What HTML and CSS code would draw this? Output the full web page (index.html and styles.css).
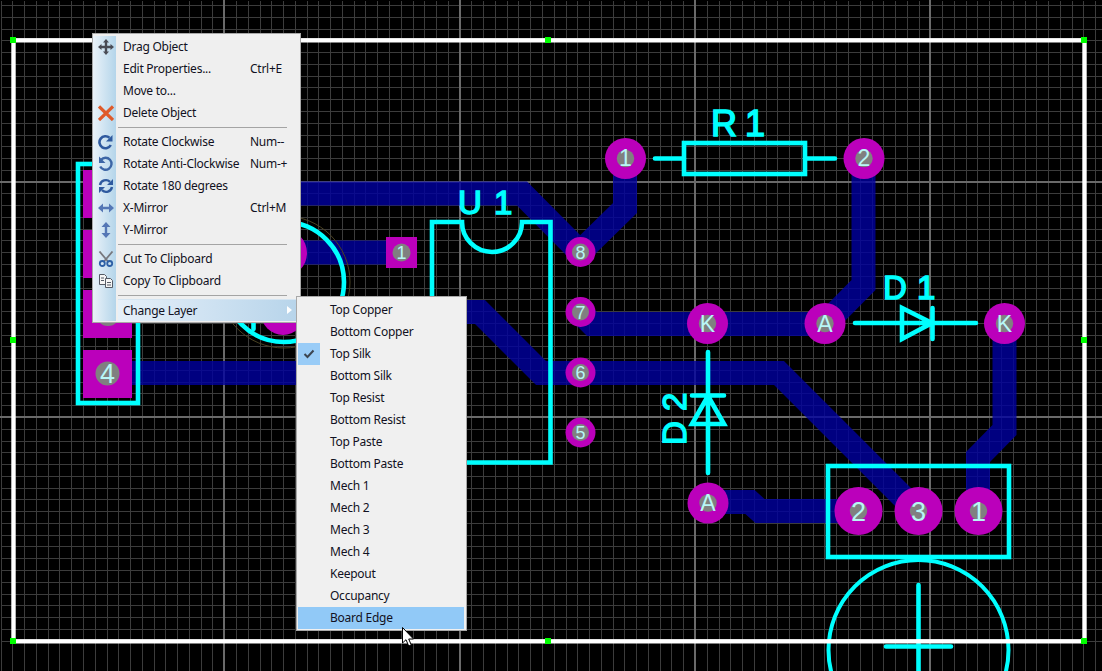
FILE: index.html
```html
<!DOCTYPE html>
<html lang="en">
<head>
  <meta charset="UTF-8">
  <title>PCB Layout</title>
  <link rel="stylesheet" href="styles.css">
</head>
<body>
  <div class="board">
    <svg class="pcb" width="1102" height="671" viewBox="0 0 1102 671">
      <path id="gridMinor" class="grid-minor" d=""/>
      <path id="gridMajor" class="grid-major" d=""/>

      <!-- copper -->
      <g class="tracks">
        <path d="M108 373H296"/>
        <path d="M290 193.500H522L580 252"/>
        <path d="M625 158V208L580 252"/>
        <path d="M300 252.500H401"/>
        <path d="M440 312H480L541 373H779L918 512"/>
        <path d="M580 312L592 324H825L863.500 285V158"/>
        <path d="M1004.500 323V430L978 457V511"/>
        <path d="M708 502H750L760 511H858"/>
      </g>

      <!-- pads -->
      <g class="pads">
        <rect x="83" y="170" width="49" height="48"/>
        <rect x="83" y="230" width="49" height="48"/>
        <rect x="83" y="290" width="49" height="48"/>
        <rect x="83" y="350" width="49" height="48"/>
        <rect x="386" y="237" width="31" height="31"/>
        <circle cx="283" cy="253" r="24"/>
        <circle cx="283" cy="313" r="22"/>
        <circle cx="625.500" cy="158.500" r="20.500"/>
        <circle cx="864" cy="158.500" r="20.500"/>
        <circle cx="707.500" cy="323.500" r="20.500"/>
        <circle cx="825" cy="323.500" r="20.500"/>
        <circle cx="1004.500" cy="323.500" r="20.500"/>
        <circle cx="708" cy="503" r="20.500"/>
        <circle cx="580.500" cy="252" r="15"/>
        <circle cx="580.500" cy="312" r="15"/>
        <circle cx="580.500" cy="372.500" r="15"/>
        <circle cx="580.500" cy="432.500" r="15"/>
        <circle cx="858.500" cy="511" r="24"/>
        <circle cx="918.500" cy="511" r="24"/>
        <circle cx="978.500" cy="511" r="24"/>
      </g>
      <g class="holes">
        <circle cx="108" cy="194" r="12"/>
        <circle cx="108" cy="254" r="12"/>
        <circle cx="108" cy="314" r="12"/>
        <circle cx="107.500" cy="373.500" r="12"/>
        <circle cx="401.500" cy="252.500" r="9"/>
        <circle cx="625.500" cy="158.500" r="8.700"/>
        <circle cx="864" cy="158.500" r="8.700"/>
        <circle cx="707.500" cy="323.500" r="8.700"/>
        <circle cx="825" cy="323.500" r="8.700"/>
        <circle cx="1004.500" cy="323.500" r="8.700"/>
        <circle cx="708" cy="503" r="8.700"/>
        <circle cx="580.500" cy="252" r="8.500"/>
        <circle cx="580.500" cy="312" r="8.500"/>
        <circle cx="580.500" cy="372.500" r="8.500"/>
        <circle cx="580.500" cy="432.500" r="8.500"/>
        <circle cx="858.500" cy="511" r="8.700"/>
        <circle cx="918.500" cy="511" r="8.700"/>
        <circle cx="978.500" cy="511" r="8.700"/>
      </g>
      <g class="labels">
        <text class="lbl-big" x="107.500" y="383">4</text>
        <text class="lbl-sm" x="401.500" y="259">1</text>
        <text class="lbl-mid" x="625.500" y="166">1</text>
        <text class="lbl-mid" x="864" y="166">2</text>
        <text class="lbl-mid" x="707.500" y="331.500">K</text>
        <text class="lbl-mid" x="825" y="331.500">A</text>
        <text class="lbl-mid" x="1004.500" y="331.500">K</text>
        <text class="lbl-mid" x="708" y="511">A</text>
        <text class="lbl-sm" x="580.500" y="258.500">8</text>
        <text class="lbl-sm" x="580.500" y="318.500">7</text>
        <text class="lbl-sm" x="580.500" y="379">6</text>
        <text class="lbl-sm" x="580.500" y="439">5</text>
        <text class="lbl-big" x="858.500" y="520.500">2</text>
        <text class="lbl-big" x="918.500" y="520.500">3</text>
        <text class="lbl-big" x="978.500" y="520.500">1</text>
      </g>

      <!-- silk -->
      <g class="silk">
        <rect x="78" y="164" width="60" height="239"/>
        <circle cx="284" cy="282" r="60"/>
        <path d="M253.500 320V329"/>
        <path d="M432 222H462A30 30 0 0 0 522 222H550.500V462.500H432Z"/>
        <rect x="684" y="143" width="121" height="31"/>
        <path d="M655 158.500H684M805 158.500H835"/>
        <path d="M855 323H976M902 308V339L932 323ZM932.500 308V339"/>
        <path d="M708 352V473M692 395.500H724M708 396L692 424H724Z"/>
        <rect x="828" y="466" width="181" height="91"/>
        <circle class="silk-thin" cx="918.500" cy="650" r="90"/>
        <path d="M918.500 585V671M886 646.500H951"/>
      </g>
      <circle class="courtyard" cx="284" cy="282" r="66"/>
      <g class="silk-text">
        <text x="711 745" y="136" class="ref-lg">R1</text>
        <text x="458 494" y="214" class="ref-md">U1</text>
        <text x="883 917" y="299" class="ref-md">D1</text>
        <text x="0 34" y="0" class="ref-md" transform="translate(686,445) rotate(-90)">D2</text>
      </g>

      <!-- board edge -->
      <rect class="edge" x="13.500" y="40.300" width="1071" height="601"/>
      <g class="handles">
        <rect x="10" y="37" width="6" height="6"/>
        <rect x="545" y="37" width="6" height="6"/>
        <rect x="1081" y="37" width="6" height="6"/>
        <rect x="10" y="337" width="6" height="6"/>
        <rect x="1081" y="337" width="6" height="6"/>
        <rect x="10" y="638" width="6" height="6"/>
        <rect x="545" y="638" width="6" height="6"/>
        <rect x="1081" y="638" width="6" height="6"/>
      </g>
    </svg>

    <div class="menu menu-main">
      <div class="row">
        <span class="ico">
          <svg width="16" height="16" viewBox="0 0 16 16"><path fill="#4a4c55" d="M8 0L11 3.500H9.200V6.800H12.500V5L16 8L12.500 11V9.200H9.200V12.500H11L8 16L5 12.500H6.800V9.200H3.500V11L0 8L3.500 5V6.800H6.800V3.500H5Z"/></svg>
        </span>
        <span class="item">Drag Object</span>
      </div>
      <div class="row">
        <span class="ico"></span>
        <span class="item">Edit Properties...<span class="keys">Ctrl+E</span></span>
      </div>
      <div class="row">
        <span class="ico"></span>
        <span class="item">Move to...</span>
      </div>
      <div class="row">
        <span class="ico">
          <svg width="16" height="16" viewBox="0 0 16 16"><path fill="none" stroke="#df5a2a" stroke-width="3.200" d="M1 1.500L15 15M15 1.500L1 15"/></svg>
        </span>
        <span class="item">Delete Object</span>
      </div>
      <div class="sep"></div>
      <div class="row">
        <span class="ico">
          <svg width="16" height="16" viewBox="0 0 16 16"><path fill="none" stroke="#2f5a9f" stroke-width="2.600" d="M12.800 11A6 6 0 1 1 11.500 3.800"/><path fill="#2f5a9f" d="M14.500 1V7.500H8Z"/></svg>
        </span>
        <span class="item">Rotate Clockwise<span class="keys">Num--</span></span>
      </div>
      <div class="row">
        <span class="ico">
          <svg width="16" height="16" viewBox="0 0 16 16"><path fill="none" stroke="#3d66a6" stroke-width="2.400" d="M3 3.800A6 6 0 1 1 2.200 10.500"/><path fill="#3d66a6" d="M1 0.500V7H7.500Z"/></svg>
        </span>
        <span class="item">Rotate Anti-Clockwise<span class="keys">Num-+</span></span>
      </div>
      <div class="row">
        <span class="ico">
          <svg width="16" height="16" viewBox="0 0 16 16"><path fill="none" stroke="#2f5a9f" stroke-width="2.400" d="M2 7A6 6 0 0 1 12 3.800M14 9A6 6 0 0 1 4 12.200"/><path fill="#2f5a9f" d="M15 1V7H9ZM1 15V9H7Z"/></svg>
        </span>
        <span class="item">Rotate 180 degrees</span>
      </div>
      <div class="row">
        <span class="ico">
          <svg width="16" height="16" viewBox="0 0 16 16"><path fill="#5577b5" d="M0 8L5 3.500V6.800H11V3.500L16 8L11 12.500V9.200H5V12.500Z"/></svg>
        </span>
        <span class="item">X-Mirror<span class="keys">Ctrl+M</span></span>
      </div>
      <div class="row">
        <span class="ico">
          <svg width="16" height="16" viewBox="0 0 16 16"><path fill="#5577b5" d="M8 0L12.500 5H9.200V11H12.500L8 16L3.500 11H6.800V5H3.500Z"/></svg>
        </span>
        <span class="item">Y-Mirror</span>
      </div>
      <div class="sep"></div>
      <div class="row">
        <span class="ico">
          <svg width="16" height="16" viewBox="0 0 16 16"><path fill="none" stroke="#77787e" stroke-width="1.800" d="M1.500 0.500L10 10.500M14.500 0.500L6 10.500"/><circle cx="4.300" cy="12.500" r="2.500" fill="none" stroke="#2d5fa5" stroke-width="1.800"/><circle cx="11.700" cy="12.500" r="2.500" fill="none" stroke="#2d5fa5" stroke-width="1.800"/></svg>
        </span>
        <span class="item">Cut To Clipboard</span>
      </div>
      <div class="row">
        <span class="ico">
          <svg width="16" height="16" viewBox="0 0 16 16"><path fill="#f5f5f5" stroke="#555b66" d="M1.500 1.500H6.500L8.500 3.500V11.500H1.500Z"/><path fill="#f5f5f5" stroke="#555b66" d="M7.500 5.500H12.500L14.500 7.500V14.500H7.500Z"/><path fill="none" stroke="#555b66" d="M3 5H6M3 7.500H6M9 9.500H13M9 12H13"/></svg>
        </span>
        <span class="item">Copy To Clipboard</span>
      </div>
      <div class="sep"></div>
      <div class="row">
        <span class="ico"></span>
        <span class="item active">Change Layer<span class="arrow"></span></span>
      </div>
    </div>

    <div class="menu menu-sub">
      <div class="row"><span class="tick"></span>Top Copper</div>
      <div class="row"><span class="tick"></span>Bottom Copper</div>
      <div class="row">
        <span class="tick checked">
          <svg width="12" height="10" viewBox="0 0 12 10"><path fill="none" stroke="#3c4550" stroke-width="2" d="M1.500 5L4.500 8L10.500 1.500"/></svg>
        </span>
        Top Silk
      </div>
      <div class="row"><span class="tick"></span>Bottom Silk</div>
      <div class="row"><span class="tick"></span>Top Resist</div>
      <div class="row"><span class="tick"></span>Bottom Resist</div>
      <div class="row"><span class="tick"></span>Top Paste</div>
      <div class="row"><span class="tick"></span>Bottom Paste</div>
      <div class="row"><span class="tick"></span>Mech 1</div>
      <div class="row"><span class="tick"></span>Mech 2</div>
      <div class="row"><span class="tick"></span>Mech 3</div>
      <div class="row"><span class="tick"></span>Mech 4</div>
      <div class="row"><span class="tick"></span>Keepout</div>
      <div class="row"><span class="tick"></span>Occupancy</div>
      <div class="row hover"><span class="tick"></span>Board Edge</div>
    </div>

    <svg class="cursor" width="14" height="21" viewBox="0 0 14 21">
      <path fill="#fff" stroke="#000" d="M0.500 0.500V16L4 12.700L6.700 19L9.300 18L6.700 12H11.500Z"/>
    </svg>
  </div>

  <script>
    // grid lines, every 20th one is a major line
    const pitch = 11.77;
    function gridLines(start, count, size, major) {
      let d = '';
      for (let i = 0; i < count; i++) {
        if ((i % 20 === 0) !== major) continue;
        d += 'M' + Math.round(start + i * pitch) + ' 0V' + size;
      }
      return d;
    }
    function gridLinesH(start, count, size, major) {
      let d = '';
      for (let i = 0; i < count; i++) {
        if ((i % 20 === 0) !== major) continue;
        d += 'M0 ' + Math.round(start + i * pitch) + 'H' + size;
      }
      return d;
    }
    const startX = 695 - 60 * pitch;
    const startY = 181.6 - 20 * pitch;
    document.getElementById('gridMinor').setAttribute('d', gridLines(startX, 100, 671, false) + gridLinesH(startY, 60, 1102, false));
    document.getElementById('gridMajor').setAttribute('d', gridLines(startX, 100, 671, true) + gridLinesH(startY, 60, 1102, true));
  </script>
</body>
</html>
```

FILE: styles.css
```css
body { margin: 0; background: #000; font-family: "Noto Sans", "Liberation Sans", sans-serif; }
.board { position: relative; width: 1102px; height: 671px; overflow: hidden; background: #000; }
.pcb { display: block; }

.grid-minor { fill: none; stroke: #3c3c3c; stroke-width: 1; shape-rendering: crispEdges; transform: translate(0.5px, 0.5px); }
.grid-major { fill: none; stroke: #6a6a6a; stroke-width: 2; shape-rendering: crispEdges; }

.tracks { fill: none; stroke: #0000a0; stroke-width: 24; stroke-linejoin: miter; opacity: 0.8; }
.pads { fill: #bb00bb; }
.holes { fill: #808080; }
.labels { fill: #b8f6f6; font-family: "Liberation Sans", sans-serif; text-anchor: middle; }
.lbl-sm { font-size: 18px; }
.lbl-mid { font-size: 23px; }
.lbl-big { font-size: 27px; }

.silk { fill: none; stroke: #00ffff; stroke-width: 4.600; stroke-linecap: round; stroke-linejoin: miter; }
.silk-thin { stroke-width: 4; }
.courtyard { fill: none; stroke: #4a4222; stroke-width: 1; }
.silk-text { fill: #00ffff; stroke: #00ffff; stroke-width: 1.500; font-family: "Liberation Sans", sans-serif; }
.ref-lg { font-size: 36px; }
.ref-md { font-size: 33px; }

.edge { fill: none; stroke: #fff; stroke-width: 4.400; }
.handles { fill: #00ff00; }

/* context menus */
.menu { position: absolute; box-sizing: border-box; border: 1px solid #a8a8a8; background: #f0f0f0; padding: 2px 1px; font-size: 12px; letter-spacing: -0.25px; color: #111122; }
.menu-main { left: 92px; top: 33px; width: 209px; height: 290px; background-color: #efefef; background-image: linear-gradient(to right, #eaf2f9, #b4d5ea); background-repeat: no-repeat; background-position: 0 2px; background-size: 23px 285px; }
.menu-sub { left: 296px; top: 296px; width: 171px; height: 335px; padding-right: 2px; }
.row { display: flex; align-items: center; box-sizing: border-box; height: 22px; padding-bottom: 1px; white-space: nowrap; }
.ico { flex: none; display: flex; align-items: center; justify-content: center; width: 23px; height: 22px; margin: 0 1px -1px 0; }
.item { display: flex; align-items: center; flex: 1; box-sizing: border-box; height: 22px; padding: 0 0 1px 5px; margin-bottom: -1px; position: relative; }
.keys { position: absolute; left: 132px; }
.active { background: linear-gradient(to right, #e6f0f9, #b7d4ea); border-top: 1px solid #d5e5f2; }
.arrow { margin-left: auto; margin-right: 7px; border-left: 5px solid #fff; border-top: 4px solid transparent; border-bottom: 4px solid transparent; }
.sep { height: 1px; margin: 3px 12px 3px 24px; background: #a4a4a4; }
.tick { flex: none; display: flex; align-items: center; justify-content: center; width: 22px; height: 22px; margin: 0 10px -1px 0; }
.checked { background: #99ccf7; }
.hover { background: #91c9f7; }

.cursor { position: absolute; left: 402px; top: 627px; }
```
